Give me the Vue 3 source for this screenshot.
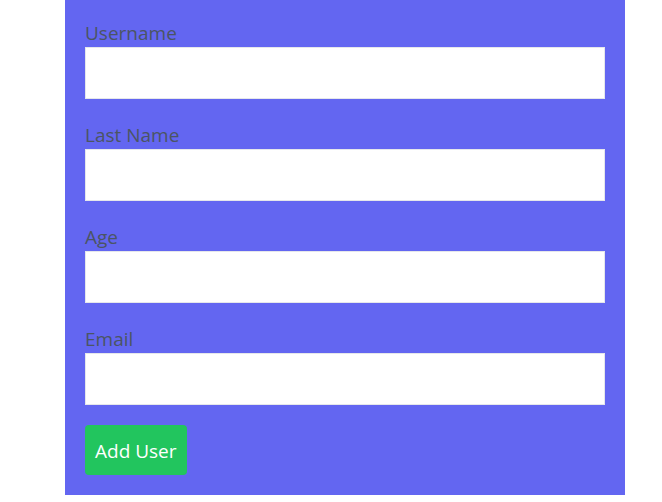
<script setup>
import { reactive } from 'vue'

const fields = [
  { key: 'username', label: 'Username', type: 'text' },
  { key: 'lastName', label: 'Last Name', type: 'text' },
  { key: 'age', label: 'Age', type: 'text' },
  { key: 'email', label: 'Email', type: 'email' },
]

const form = reactive({ username: '', lastName: '', age: '', email: '' })
</script>

<template>
  <main class="page">
    <form class="card" @submit.prevent>
      <div v-for="field in fields" :key="field.key" class="field">
        <label class="label" :for="field.key">{{ field.label }}</label>
        <input :id="field.key" v-model="form[field.key]" class="input" :type="field.type" />
      </div>
      <button class="submit" type="submit">Add User</button>
    </form>
  </main>
</template>

<style>
body {
  margin: 0;
  background: #ffffff;
}
</style>

<style scoped>
.page {
  padding: 0 37px 0 65px;
  font-family: "Segoe UI", "Open Sans", "Noto Sans", sans-serif;
  font-size: 19px;
  line-height: 26px;
}

.card {
  display: flex;
  flex-direction: column;
  align-items: flex-start;
  gap: 20px;
  padding: 17px 20px 20px;
  background: #6366f1;
}

.field {
  display: flex;
  flex-direction: column;
  width: 100%;
}

.label {
  padding: 3px 0 1px;
  color: #4b5563;
}

.input {
  box-sizing: border-box;
  width: 100%;
  height: 52px;
  padding: 10px;
  border: 1px solid #e5e7eb;
  border-radius: 0;
  background: #ffffff;
  color: #374151;
  font: inherit;
}

.submit {
  padding: 13px 10px 11px;
  border: 0;
  border-radius: 4px;
  background: #22c55e;
  color: #ffffff;
  font: inherit;
  cursor: pointer;
}
</style>
